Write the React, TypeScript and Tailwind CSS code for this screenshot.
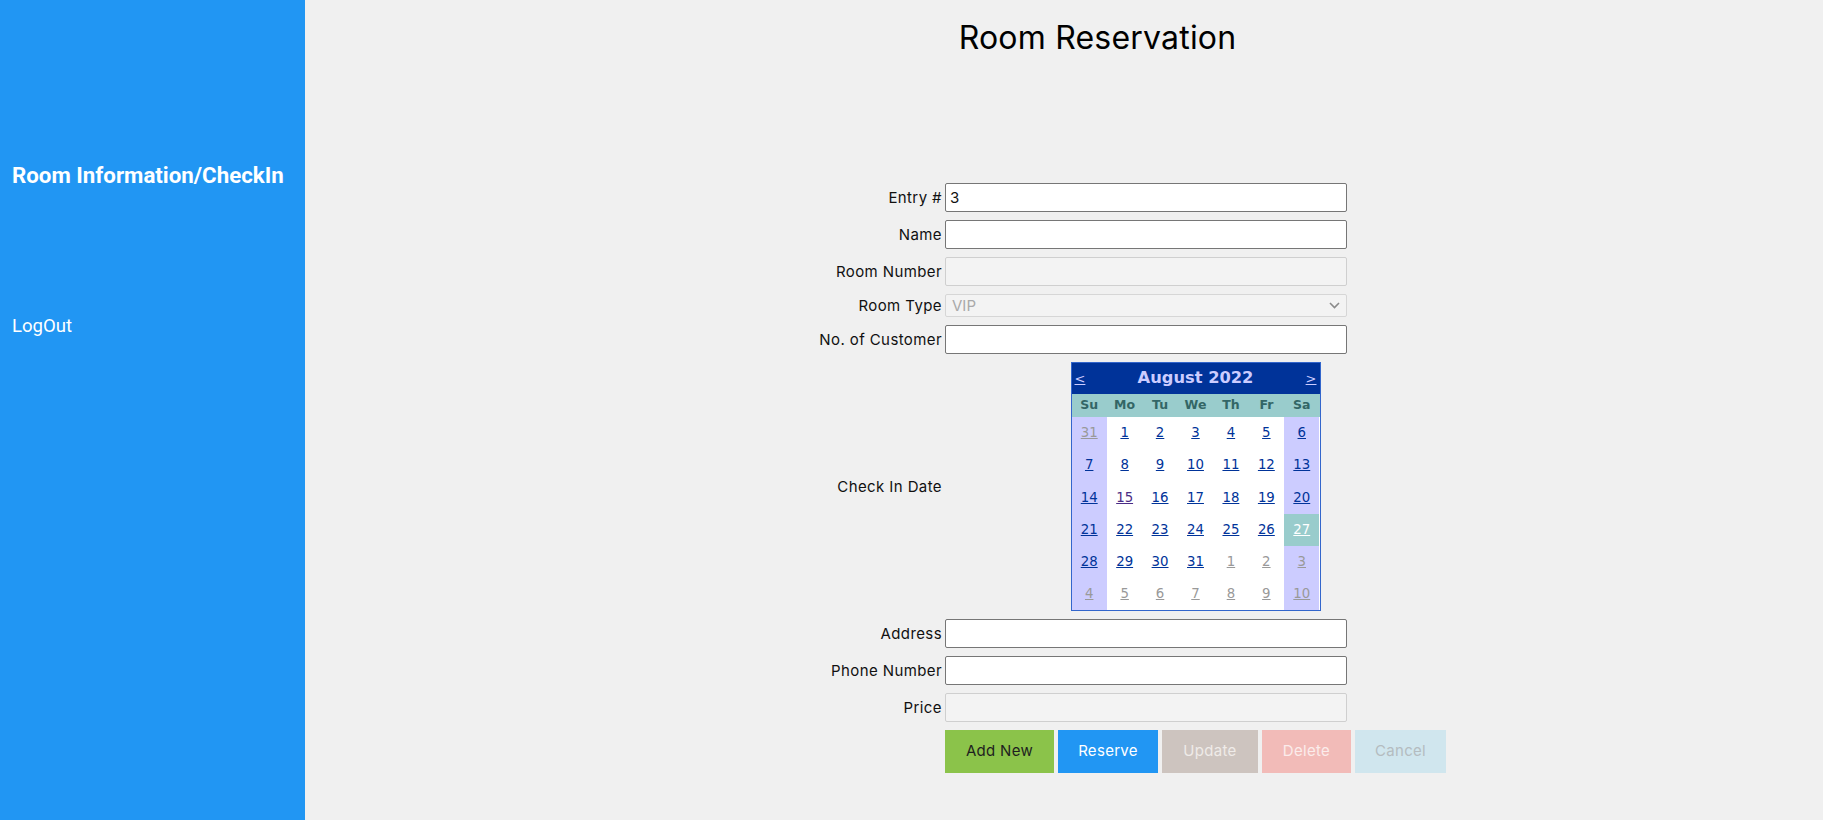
import React from "react";

const days = Array.from({ length: 42 }, (_, i) => {
  if (i === 0) return { d: 31, o: true };
  if (i <= 31) return { d: i, o: false };
  return { d: i - 31, o: true };
});

const weeks = Array.from({ length: 6 }, (_, w) => days.slice(w * 7, w * 7 + 7));
const rowH = ["h-[32px]", "h-[32px]", "h-[33px]", "h-[32px]", "h-[32px]", "h-[32px]"];

function Calendar() {
  return (
    <div className="w-[250px] h-[249px] border border-[#3366CC] bg-white font-['DejaVu_Sans',Verdana,sans-serif] flex flex-col">
      <div className="h-[31px] bg-[#003399] text-[#CCCCFF] grid grid-cols-[1fr_auto_1fr] items-center">
        <span className="pl-[3px] text-[13px] underline leading-none">&lt;</span>
        <span className="text-[16.3px] font-bold leading-none">August 2022</span>
        <span className="pr-[3px] text-[13px] underline leading-none text-right">&gt;</span>
      </div>
      <div className="h-[23px] bg-[#99CCCC] grid grid-cols-7 items-center text-center text-[#336666] text-[12.5px] font-bold">
        {["Su", "Mo", "Tu", "We", "Th", "Fr", "Sa"].map((d) => (
          <span key={d}>{d}</span>
        ))}
      </div>
      <div className="flex flex-col">
        {weeks.map((wk, wi) => (
          <div key={wi} className={`grid grid-cols-7 ${rowH[wi]}`}>
            {wk.map((c, ci) => {
              const sel = !c.o && c.d === 27;
              const weekend = ci === 0 || ci === 6;
              const bg = sel ? "bg-[#99CCCC]" : weekend ? "bg-[#CCCCFF]" : "bg-white";
              const color = sel
                ? "text-white"
                : c.o
                ? "text-[#999999]"
                : !c.o && c.d === 15
                ? "text-[#4a2c86]"
                : "text-[#003399]";
              return (
                <div key={ci} className={`${bg} flex items-center justify-center`}>
                  <span className={`${color} text-[13.3px] underline leading-none`}>{c.d}</span>
                </div>
              );
            })}
          </div>
        ))}
      </div>
    </div>
  );
}

function Row({ label, children }: { label: string; children: React.ReactNode }) {
  return (
    <div className="flex items-center">
      <div className="w-[142px] text-right text-[15px] tracking-[0.4px] text-[#111] leading-none">{label}</div>
      <div className="ml-[3px]">{children}</div>
    </div>
  );
}

const inputCls =
  "block w-[402px] h-[29px] border border-[#767676] rounded-[2px] bg-white px-[4px] text-[15px] text-[#111] outline-none";
const disabledCls =
  "block w-[402px] h-[29px] border border-[#cfcfcf] rounded-[2px] bg-[#f3f3f3] px-[4px] text-[15px] outline-none";

export default function App() {
  return (
    <div className="flex min-h-[820px] w-full font-['Inter',sans-serif]">
      <aside className="w-[305px] shrink-0 bg-[#2196F3] text-white font-['Roboto',sans-serif]">
        <div className="pl-[12px] pt-[162px] text-[22.3px] font-bold leading-[26px]">Room Information/CheckIn</div>
        <div className="pl-[12px] mt-[127px] text-[18.6px] leading-[22px]">LogOut</div>
      </aside>
      <main className="flex-1 bg-[#f0f0f0]">
        <div className="h-[183px] pt-[19px] pl-[67px] text-center">
          <h1 className="text-[32px] leading-[38px] font-normal text-black tracking-[0.2px]">Room Reservation</h1>
        </div>
        <div className="ml-[495px] flex flex-col gap-[8px]">
          <Row label="Entry #">
            <input className={inputCls} defaultValue="3" readOnly />
          </Row>
          <Row label="Name">
            <input className={inputCls} readOnly />
          </Row>
          <Row label="Room Number">
            <input className={disabledCls} disabled />
          </Row>
          <Row label="Room Type">
            <div className="w-[402px] h-[23px] border border-[#d6d6d6] rounded-[2px] bg-[#f3f3f3] pl-[6px] pr-[6px] flex items-center justify-between">
              <span className="text-[15px] text-[#a9a9a9] leading-none">VIP</span>
              <svg width="11" height="7" viewBox="0 0 11 7" fill="none">
                <polyline points="1,1 5.5,5.5 10,1" stroke="#8a8a8a" strokeWidth="1.6" />
              </svg>
            </div>
          </Row>
          <Row label="No. of Customer">
            <input className={inputCls} readOnly />
          </Row>
          <Row label="Check In Date">
            <div className="w-[501px] flex justify-center">
              <Calendar />
            </div>
          </Row>
          <Row label="Address">
            <input className={inputCls} readOnly />
          </Row>
          <Row label="Phone Number">
            <input className={inputCls} readOnly />
          </Row>
          <Row label="Price">
            <input className={disabledCls} disabled />
          </Row>
          <div className="ml-[145px] flex gap-[4px] text-[15px] tracking-[0.3px]">
            <button className="w-[109px] h-[43px] bg-[#8BC34A] text-[#1f1f1f]">Add New</button>
            <button className="w-[100px] h-[43px] bg-[#2196F3] text-white">Reserve</button>
            <button className="w-[96px] h-[43px] bg-[#CDC4BF] text-[#efebe8]">Update</button>
            <button className="w-[89px] h-[43px] bg-[#F2BBB8] text-[#fbeceb]">Delete</button>
            <button className="w-[91px] h-[43px] bg-[#D0E6EE] text-[#b4bcc0]">Cancel</button>
          </div>
        </div>
      </main>
    </div>
  );
}
